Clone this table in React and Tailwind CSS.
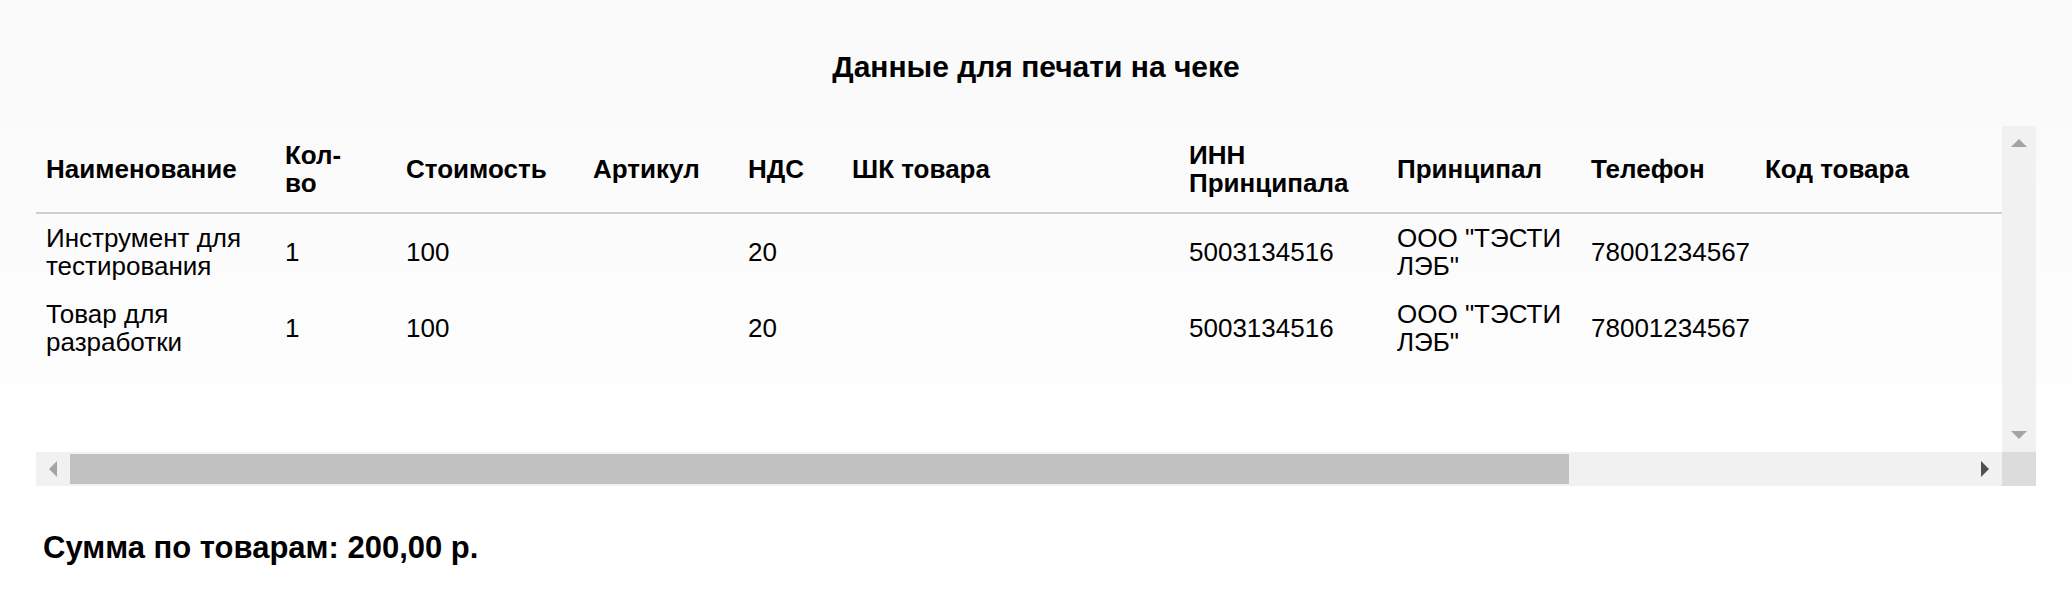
import React from "react";

const columns = [
  { title: "Наименование", w: "w-[239px]" },
  { title: (<>Кол-<br />во</>), w: "w-[121px]" },
  { title: "Стоимость", w: "w-[187px]" },
  { title: "Артикул", w: "w-[155px]" },
  { title: "НДС", w: "w-[104px]" },
  { title: "ШК товара", w: "w-[337px]" },
  { title: "ИНН Принципала", w: "w-[208px]" },
  { title: "Принципал", w: "w-[194px]" },
  { title: "Телефон", w: "w-[174px]" },
  { title: "Код товара", w: "w-[785px]" },
];

const rows = [
  ["Инструмент для тестирования", "1", "100", "", "20", "", "5003134516", 'ООО "ТЭСТИ ЛЭБ"', "78001234567", ""],
  ["Товар для разработки", "1", "100", "", "20", "", "5003134516", 'ООО "ТЭСТИ ЛЭБ"', "78001234567", ""],
];

// little triangles for the scrollbar buttons
const Arrow = ({ dir, color }) => {
  const pts = {
    up: "0,8 8,0 16,8",
    down: "0,0 16,0 8,8",
    left: "8,0 8,16 0,8",
    right: "0,0 8,8 0,16",
  }[dir];
  const vertical = dir === "up" || dir === "down";
  return (
    <svg width={vertical ? 16 : 8} height={vertical ? 8 : 16} viewBox={vertical ? "0 0 16 8" : "0 0 8 16"}>
      <polygon points={pts} fill={color} />
    </svg>
  );
};

const App = () => {
  return (
    <div className="min-h-[612px] bg-[linear-gradient(to_bottom,#f9f9f9_0px,#fdfdfd_383px,#ffffff_383px)] font-['Liberation_Sans',Arial,sans-serif] text-black">
      {/* title */}
      <h2 className="pt-[50px] text-center text-[30px] leading-[34px] font-bold">
        Данные для печати на чеке
      </h2>

      <section className="px-[36px] mt-[42px]">
        {/* scroll box with its bars */}
        <div className="grid grid-cols-[1fr_34px] grid-rows-[326px_34px]">
          <div className="overflow-hidden">
            <table className="table-fixed w-[2504px] border-collapse text-[26px] leading-[28px]">
              <thead>
                <tr className="border-b-2 border-[#cfcfcf]">
                  {columns.map((c, i) => (
                    <th key={i} className={`${c.w} px-[10px] py-[15px] text-left align-middle font-bold`}>
                      {c.title}
                    </th>
                  ))}
                </tr>
              </thead>
              <tbody>
                {rows.map((r, ri) => (
                  <tr key={ri}>
                    {r.map((cell, ci) => (
                      <td key={ci} className="px-[10px] py-[10px] align-middle">
                        {cell}
                      </td>
                    ))}
                  </tr>
                ))}
              </tbody>
            </table>
          </div>

          {/* vertical bar */}
          <div className="bg-[#f1f1f1] flex flex-col justify-between">
            <div className="h-[34px] flex items-center justify-center">
              <Arrow dir="up" color="#a3a3a3" />
            </div>
            <div className="h-[34px] flex items-center justify-center">
              <Arrow dir="down" color="#a3a3a3" />
            </div>
          </div>

          {/* horizontal bar */}
          <div className="bg-[#f1f1f1] flex">
            <div className="w-[34px] flex items-center justify-center">
              <Arrow dir="left" color="#a3a3a3" />
            </div>
            <div className="flex-1 py-[2px]">
              <div className="w-[1499px] h-full bg-[#c1c1c1]" />
            </div>
            <div className="w-[34px] flex items-center justify-center">
              <Arrow dir="right" color="#505050" />
            </div>
          </div>
          <div className="bg-[#dcdcdc]" />
        </div>

        <p className="ml-[7px] mt-[44px] text-[31px] leading-[35px] font-bold">
          Сумма по товарам: 200,00 р.
        </p>
      </section>
    </div>
  );
};

export default App;
